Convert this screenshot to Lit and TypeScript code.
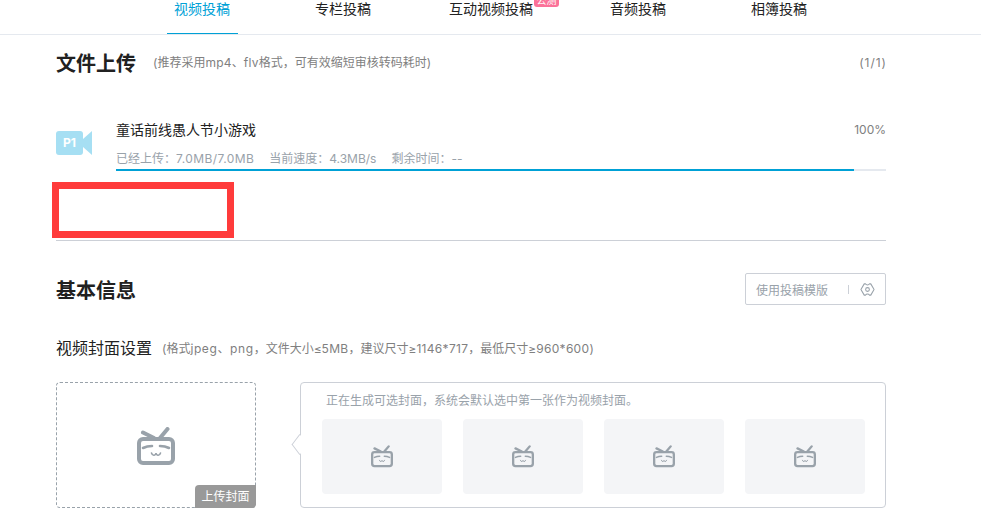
import { LitElement, html, css, svg } from "lit";
import { customElement } from "lit/decorators.js";

const tvIcon = (cls: string) => html`<svg class=${cls} viewBox="0 0 38 39" fill="none" stroke="#99a2aa" stroke-linecap="round">
  ${svg`<rect x="2" y="12" width="34" height="24" rx="4" stroke-width="4"/>
  <path d="M6 5.500 17 11M30.500 2 23 11" stroke-width="4"/>
  <path d="M6 21q4-2 9-2M23 19q5 0 9 2" stroke-width="2.600"/>
  <path d="M14.500 26q.8 2.600 2.700 2.200 1.600-.3 1.800-2 .2 1.700 1.800 2 1.900.4 2.700-2.200" stroke-width="1.600"/>`}
</svg>`;

@customElement("app-root")
export class AppRoot extends LitElement {
  static styles = css`
    :host {
      display: block;
      height: 531px;
      overflow: hidden;
      position: relative;
      background: #fff;
      color: #222;
      font-family: "Inter", "Noto Sans CJK SC", "Liberation Sans", sans-serif;
      font-size: 12px;
    }
    .nav {
      display: flex;
      height: 34px;
      padding-left: 167px;
      border-bottom: 1px solid #e5e9ef;
    }
    .tab {
      position: relative;
      height: 33px;
      padding: 0 7px;
      font-size: 14px;
      line-height: 18px;
      white-space: nowrap;
      color: #222;
    }
    .tab.active { padding-right: 8px; color: #00a1d6; border-bottom: 1px solid #00a1d6; }
    .t2 { margin-left: 70px; }
    .t3 { margin-left: 64px; }
    .t4 { margin-left: 63px; }
    .t5 { margin-left: 71px; }
    .badge {
      position: absolute;
      left: 92px;
      top: -6px;
      width: 25px;
      height: 13px;
      background: #fb7299;
      border-radius: 3px;
      color: #fff;
      font-size: 10px;
      line-height: 13px;
      text-align: center;
    }
    .main { padding: 13px 95px 0 56px; }
    .head { display: flex; align-items: center; height: 28px; }
    .h-title { padding-top: 3px; font-size: 20px; font-weight: 700; line-height: 28px; color: #212121; }
    .hint { margin-left: 17px; padding-top: 1px; color: #808080; line-height: 28px; white-space: nowrap; }
    .count { margin-left: auto; margin-right: -1px; padding-top: 1px; letter-spacing: 1px; color: #808080; }
    .lat { letter-spacing: .4px; }
    .lat-hint { letter-spacing: .25px; }
    .lat-wide { letter-spacing: .6px; }
    .lat-narrow { letter-spacing: .3px; }
    .file { display: flex; margin-top: 44px; }
    .p1 { display: flex; align-self: flex-start; margin-top: 11px; width: 60px; flex: none; }
    .p1-box {
      width: 27px;
      height: 24px;
      border-radius: 3px;
      background: #a6dff3;
      color: #fff;
      font-weight: 700;
      text-align: center;
      line-height: 24px;
    }
    .p1 svg { width: 9px; height: 24px; display: block; }
    .info { flex: 1; }
    .title-row { display: flex; justify-content: space-between; height: 20px; line-height: 20px; }
    .name { font-size: 14px; color: #222; }
    .pct { line-height: 18px; padding-top: 1px; color: #808080; }
    .stats { display: flex; gap: 15px; margin-top: 10px; line-height: 18px; color: #99a2aa; }
    .bar { height: 2px; margin-top: 1px; background: #e5e9ef; }
    .fill { height: 100%; background: #00a1d6; }
    .divider { margin-top: 69px; border-top: 1px solid #ccd0d7; }
    .base-head { display: flex; justify-content: space-between; align-items: center; margin-top: 32px; height: 32px; }
    .tpl {
      display: flex;
      align-items: center;
      box-sizing: border-box;
      width: 141px;
      height: 32px;
      padding-left: 10px;
      border: 1px solid #ccd0d7;
      border-radius: 2px;
      color: #99a2aa;
    }
    .sep { width: 1px; height: 9px; margin-left: 20px; background: #ccd0d7; }
    .gear { width: 15px; height: 15px; margin-left: 11px; }
    .cover-head { display: flex; align-items: center; margin-top: 31px; height: 24px; }
    .cover-title { font-size: 16px; color: #222; line-height: 24px; }
    .cover-hint { margin-left: 10px; margin-top: -2px; color: #808080; white-space: nowrap; }
    .covers { display: flex; gap: 44px; margin-top: 22px; }
    .upload {
      position: relative;
      display: flex;
      align-items: center;
      justify-content: center;
      box-sizing: border-box;
      flex: none;
      width: 200px;
      height: 126px;
      border: 1px dashed #99a2aa;
      border-radius: 4px;
    }
    .big { width: 38px; height: 39px; margin-top: 3px; }
    .up-label {
      position: absolute;
      right: -1px;
      bottom: -1px;
      width: 61px;
      height: 23px;
      background: #999;
      border-radius: 4px 0 4px 0;
      color: #fff;
      line-height: 23px;
      text-align: center;
    }
    .panel {
      position: relative;
      box-sizing: border-box;
      flex: 1;
      min-width: 0;
      height: 126px;
      padding: 9px 20px 0 21px;
      border: 1px solid #ccd0d7;
      border-radius: 4px;
    }
    .arrow {
      position: absolute;
      left: -8px;
      top: 55px;
      width: 13px;
      height: 13px;
      box-sizing: border-box;
      background: #fff;
      border-left: 1px solid #ccd0d7;
      border-bottom: 1px solid #ccd0d7;
      transform: rotate(45deg) skew(8deg, 8deg);
    }
    .p-text { padding-left: 4px; line-height: 18px; color: #99a2aa; white-space: nowrap; }
    .thumbs { display: flex; gap: 21px; margin-top: 9px; }
    .thumb {
      display: flex;
      align-items: center;
      justify-content: center;
      flex: none;
      width: 120px;
      height: 75px;
      border-radius: 4px;
      background: #f4f5f7;
    }
    .small { width: 22px; height: 23px; }
    .mark {
      position: absolute;
      left: 52px;
      top: 182px;
      box-sizing: border-box;
      width: 182px;
      height: 56px;
      border: 7px solid #ff3b3b;
    }
  `;

  render() {
    return html`
      <nav class="nav">
        <div class="tab active">视频投稿</div>
        <div class="tab t2">专栏投稿</div>
        <div class="tab t3">互动视频投稿<span class="badge">公测</span></div>
        <div class="tab t4">音频投稿</div>
        <div class="tab t5">相簿投稿</div>
      </nav>
      <main class="main">
        <div class="head">
          <div class="h-title">文件上传</div>
          <div class="hint">(推荐采用<span class="lat-hint">mp4</span>、<span class="lat-hint">flv</span>格式，可有效缩短审核转码耗时)</div>
          <div class="count">(1/1)</div>
        </div>
        <div class="file">
          <div class="p1">
            <div class="p1-box">P1</div>
            <svg viewBox="0 0 9 24"><path d="M0 8 9 0V24L0 16Z" fill="#a6dff3"/></svg>
          </div>
          <div class="info">
            <div class="title-row">
              <span class="name">童话前线愚人节小游戏</span>
              <span class="pct">100%</span>
            </div>
            <div class="stats">
              <span>已经上传：<span class="lat">7.0MB/7.0MB</span></span>
              <span>当前速度：4.3MB/s</span>
              <span>剩余时间：--</span>
            </div>
            <div class="bar"><div class="fill" style="width: 738px"></div></div>
          </div>
        </div>
        <div class="divider"></div>
        <div class="base-head">
          <div class="h-title">基本信息</div>
          <div class="tpl">
            <span>使用投稿模版</span>
            <span class="sep"></span>
            <svg class="gear" viewBox="0 0 16 16" fill="none" stroke="#99a2aa" stroke-width="1.100" stroke-linejoin="round">
              <path d="M1 8 4.500 2H6q.5 1.200 2 1.200T10 2h1.500L15 8l-3.500 6H10q-.5-1.200-2-1.200T6 14H4.500Z"/>
              <circle cx="8" cy="8" r="2"/>
            </svg>
          </div>
        </div>
        <div class="cover-head">
          <div class="cover-title">视频封面设置</div>
          <div class="cover-hint">(格式<span class="lat-wide">jpeg、png</span>，文件大小≤<span class="lat-narrow">5MB</span>，建议尺寸≥<span class="lat-narrow">1146*717</span>，最低尺寸≥<span class="lat-narrow">960*600</span>)</div>
        </div>
        <div class="covers">
          <div class="upload">
            ${tvIcon("big")}
            <div class="up-label">上传封面</div>
          </div>
          <div class="panel">
            <div class="arrow"></div>
            <div class="p-text">正在生成可选封面，系统会默认选中第一张作为视频封面。</div>
            <div class="thumbs">
              ${[0, 1, 2, 3].map(() => html`<div class="thumb">${tvIcon("small")}</div>`)}
            </div>
          </div>
        </div>
      </main>
      <div class="mark"></div>
    `;
  }
}
